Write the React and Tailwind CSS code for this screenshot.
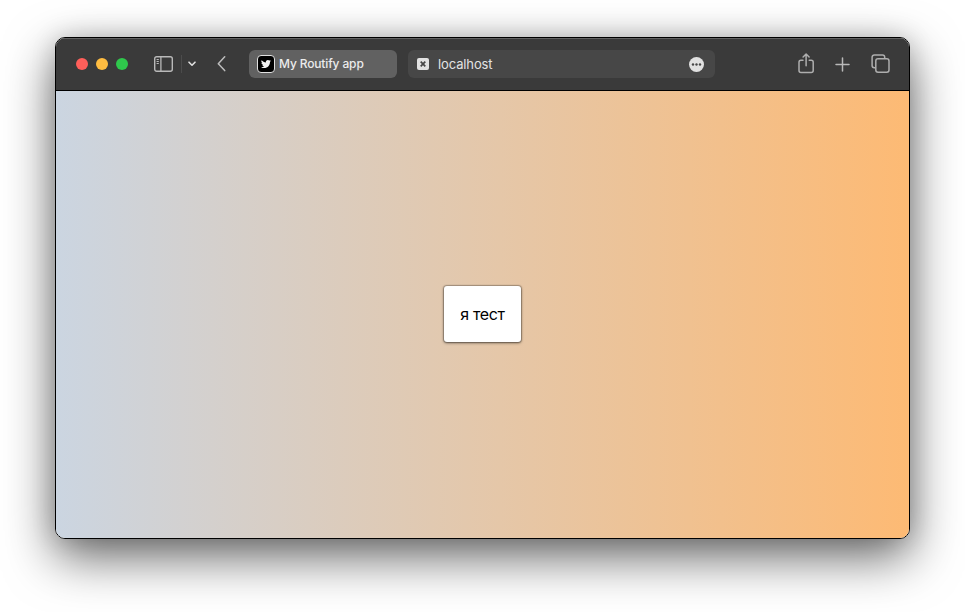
import React from "react";

function SidebarIcon() {
  return (
    <svg className="ml-[26px] shrink-0" width="19" height="16" viewBox="0 0 19 16" fill="none" stroke="#b9b9b9">
      <rect x="0.7" y="0.7" width="17.6" height="14.6" rx="2" strokeWidth="1.4" />
      <path d="M6.9 .6v14.8" strokeWidth="1.3" />
      <path d="M2.6 3.5h2.2M2.6 5.5h2.2M2.6 7.5h2.2" strokeWidth="1" />
    </svg>
  );
}

function ShareIcon() {
  return (
    <svg className="shrink-0" width="16" height="21" viewBox="0 0 16 21" fill="none" stroke="#aeaeae" strokeWidth="1.5" strokeLinecap="round" strokeLinejoin="round">
      <path d="M5 7.2H3a2 2 0 0 0-2 2v8.400a2 2 0 0 0 2 2h10.200a2 2 0 0 0 2-2V9.200a2 2 0 0 0-2-2h-2" />
      <path d="M8.100 12.800V1.200M5.100 4l3-3 3 3" />
    </svg>
  );
}

function TabsIcon() {
  return (
    <svg className="ml-[21px] shrink-0" width="19" height="19" viewBox="0 0 19 19" fill="none" stroke="#aeaeae" strokeWidth="1.5">
      <path d="M4.800 13.700H3.300a2.200 2.200 0 0 1-2.200-2.200V3.200A2.200 2.200 0 0 1 3.300 1h8.200a2.200 2.200 0 0 1 2.200 2.200V4.800" />
      <rect x="4.800" y="4.800" width="13.200" height="13.400" rx="2.200" />
    </svg>
  );
}

function BirdIcon() {
  return (
    <svg width="10" height="10" viewBox="0 0 24 24" fill="#f2f2f2">
      <path d="M23.950 4.570a10 10 0 0 1-2.820.770 4.960 4.960 0 0 0 2.160-2.720c-.950.550-2 .950-3.130 1.180a4.920 4.920 0 0 0-8.380 4.480C7.690 8.090 4.070 6.130 1.640 3.160a4.920 4.920 0 0 0 1.520 6.570 4.900 4.900 0 0 1-2.230-.610v.060a4.920 4.920 0 0 0 3.950 4.830 5 5 0 0 1-2.210.080 4.940 4.940 0 0 0 4.600 3.420A9.870 9.870 0 0 1 0 19.540a14 14 0 0 0 7.550 2.210c9.050 0 14-7.500 14-13.980 0-.210 0-.420-.020-.630a9.940 9.940 0 0 0 2.420-2.570z" />
    </svg>
  );
}

function Toolbar() {
  return (
    <div className="flex h-[53px] shrink-0 items-center border-b border-black bg-[#3a3a3a] pr-[19px] pl-5 shadow-[inset_0_1px_0_#626262]">
      <div className="flex shrink-0 gap-2">
        <span className="size-3 rounded-full bg-[#ff5f5a]" />
        <span className="size-3 rounded-full bg-[#ffbd41]" />
        <span className="size-3 rounded-full bg-[#2fc84c]" />
      </div>
      <SidebarIcon />
      <span className="ml-2 h-[18px] w-px shrink-0 bg-[#4c4c4c]" />
      <svg className="ml-1.5 shrink-0" width="8" height="6" viewBox="0 0 8 6" fill="none" stroke="#dedede" strokeWidth="1.600" strokeLinecap="round" strokeLinejoin="round">
        <path d="M1 1.200 4 4.200 7 1.200" />
      </svg>
      <svg className="ml-[21px] shrink-0" width="9" height="16" viewBox="0 0 9 16" fill="none" stroke="#bcbcbc" strokeWidth="1.500" strokeLinecap="round" strokeLinejoin="round">
        <path d="M7.700 .8 1.300 7.700l6.400 6.900" />
      </svg>
      <div className="ml-[23px] flex h-7 w-[148px] shrink-0 items-center rounded-md bg-[#616161] pl-2">
        <span className="flex size-[18px] shrink-0 items-center justify-center rounded-[4px] border border-[#e0e0e0] bg-black">
          <BirdIcon />
        </span>
        <span className="ml-1 text-[12px] leading-4 font-medium tracking-[-0.14px] whitespace-nowrap text-[#ececec]">My Routify app</span>
      </div>
      <div className="ml-[11px] flex h-7 w-[307px] shrink-0 items-center rounded-md bg-[#474747] pr-[11px] pl-[9px]">
        <svg className="shrink-0" width="12" height="12" viewBox="0 0 12 12">
          <rect width="12" height="12" rx="2" fill="#e2e2e2" />
          <path d="m3.700 3.700 4.600 4.600M8.300 3.700 3.700 8.300" stroke="#474747" strokeWidth="1.700" />
        </svg>
        <span className="ml-[9px] text-[13px] leading-4 tracking-[-0.120px] text-[#e3e3e3]">localhost</span>
        <svg className="ml-auto shrink-0" width="15" height="15" viewBox="0 0 15 15">
          <circle cx="7.500" cy="7.500" r="7.500" fill="#e1e1e1" />
          <g fill="#474747">
            <circle cx="4" cy="7.500" r="1.200" />
            <circle cx="7.500" cy="7.500" r="1.200" />
            <circle cx="11" cy="7.500" r="1.200" />
          </g>
        </svg>
      </div>
      <div className="mb-[2px] ml-auto flex items-center">
        <ShareIcon />
        <svg className="mt-[2px] ml-[21px] shrink-0" width="15" height="15" viewBox="0 0 15 15" fill="none" stroke="#b8b8b8" strokeWidth="1.500" strokeLinecap="round">
          <path d="M7.500 1v13M1 7.500h13" />
        </svg>
        <TabsIcon />
      </div>
    </div>
  );
}

export default function App() {
  return (
    <div className="flex h-[612px] w-[965px] items-start justify-center overflow-hidden bg-white pt-[37px] font-['Inter','Liberation_Sans',sans-serif]">
      <div className="flex h-[502px] w-[855px] flex-col overflow-hidden rounded-[10px] border border-black shadow-[0_18px_50px_rgba(0,0,0,0.6),0_0_24px_rgba(0,0,0,0.150)]">
        <Toolbar />
        <main className="flex grow items-center justify-center bg-[linear-gradient(to_right,#cbd5e1,#fdba74)] pb-px">
          <div className="flex h-[56px] w-[77px] items-center justify-center rounded-[3px] bg-white text-[16px] leading-6 tracking-[-0.350px] text-black shadow-[0_0_1px_1px_rgba(0,0,0,0.250),0_1px_3px_rgba(0,0,0,0.5)]">
            я тест
          </div>
        </main>
      </div>
    </div>
  );
}
